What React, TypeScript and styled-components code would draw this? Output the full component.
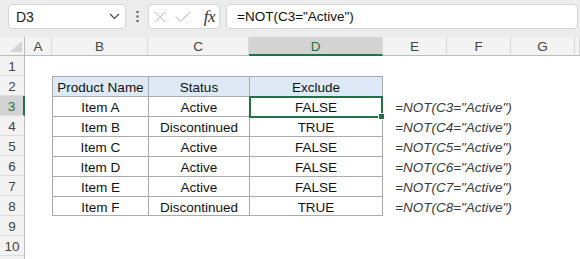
import React from "react";
import styled, { createGlobalStyle } from "styled-components";

const GREEN = "#217346";

const GlobalStyle = createGlobalStyle`
  html, body { margin: 0; padding: 0; background: #ffffff; overflow: hidden; }
  body { font-family: "Liberation Sans", Arial, sans-serif; }
`;

const Page = styled.div`
  width: 580px;
  height: 259px;
  overflow: hidden;
  display: flex;
  flex-direction: column;
  background: #ffffff;
`;

const Toolbar = styled.div`
  height: 37px;
  flex: none;
  background: #ececec;
  display: flex;
  align-items: flex-start;
  padding: 4px 2px 0 8px;
  box-sizing: border-box;
`;

const Box = styled.div<{ $w?: number }>`
  height: 25px;
  box-sizing: border-box;
  background: #ffffff;
  border: 1px solid #d6d6d6;
  border-radius: 4px;
  display: flex;
  align-items: center;
  ${(p) => (p.$w ? `width: ${p.$w}px; flex: none;` : "flex: 1;")}
`;

const NameBox = styled(Box)`
  justify-content: space-between;
  padding: 0 5px 0 7px;
  font-size: 14px;
  color: #222;
`;

const Dots = styled.div`
  width: 22px;
  height: 25px;
  flex: none;
  display: flex;
  align-items: center;
  justify-content: center;
`;

const FxBox = styled(Box)`
  padding: 0 4px 0 5px;
  gap: 8px;
`;

const FxText = styled.span`
  font-family: "Liberation Serif", "DejaVu Serif", serif;
  font-style: italic;
  font-size: 17px;
  color: #333;
  margin-left: 5px;
  letter-spacing: -0.5px;
`;

const FormulaBox = styled(Box)`
  margin-left: 6px;
  padding-left: 10px;
  font-size: 13.5px;
  color: #111;
`;

const Grid = styled.div`
  display: grid;
  grid-template-columns: 25px 27px 96px 101px 134px 64px 64px 64px 1fr;
  grid-template-rows: 19px repeat(11, 20px);
  font-size: 13.5px;
`;

const Corner = styled.div`
  background: #f3f3f3;
  border-right: 1px solid #bcbcbc;
  border-bottom: 1px solid #bcbcbc;
  box-sizing: border-box;
  display: flex;
  align-items: flex-end;
  justify-content: flex-end;
  padding: 0 2px 3px 0;
`;

const ColHeader = styled.div<{ $selected?: boolean }>`
  background: ${(p) => (p.$selected ? "#d3d3d3" : "#f3f3f3")};
  color: ${(p) => (p.$selected ? GREEN : "#444")};
  border-right: 1px solid #d9d9d9;
  border-bottom: ${(p) => (p.$selected ? `2px solid ${GREEN}` : "1px solid #bcbcbc")};
  box-sizing: border-box;
  display: flex;
  align-items: center;
  justify-content: center;
  font-size: 13.5px;
  padding-top: 1px;
`;

const RowHeader = styled.div<{ $selected?: boolean }>`
  background: ${(p) => (p.$selected ? "#d3d3d3" : "#f3f3f3")};
  color: ${(p) => (p.$selected ? GREEN : "#444")};
  border-right: ${(p) => (p.$selected ? `2px solid ${GREEN}` : "1px solid #bcbcbc")};
  border-bottom: 1px solid #dcdcdc;
  box-sizing: border-box;
  display: flex;
  align-items: center;
  justify-content: center;
  font-size: 13.5px;
  padding-top: 1px;
`;

const Cell = styled.div<{ $kind?: "blank" | "table" | "head" | "note"; $last?: boolean; $bottom?: boolean }>`
  box-sizing: border-box;
  position: relative;
  min-width: 0;
  display: flex;
  align-items: center;
  justify-content: ${(p) => (p.$kind === "note" ? "flex-start" : "center")};
  padding: 2px 0 0 ${(p) => (p.$kind === "note" ? "12px" : "0")};
  white-space: nowrap;
  overflow: visible;
  z-index: ${(p) => (p.$kind === "note" ? 1 : "auto")};
  color: ${(p) => (p.$kind === "note" ? "#3a3a3a" : "#111")};
  font-style: ${(p) => (p.$kind === "note" ? "italic" : "normal")};
  background: ${(p) =>
    p.$kind === "head" ? "#dde9f7" : p.$kind === "table" ? "#ffffff" : "transparent"};
  ${(p) =>
    p.$kind === "table" || p.$kind === "head"
      ? `border-top: 1px solid #ababab; border-left: 1px solid #ababab;`
      : ""}
  ${(p) => (p.$last ? "border-right: 1px solid #ababab;" : "")}
  ${(p) => (p.$bottom ? "border-bottom: 1px solid #ababab;" : "")}
`;

const Selection = styled.div`
  position: absolute;
  top: -1px;
  left: -1px;
  right: -1px;
  bottom: -2px;
  border: 2px solid ${GREEN};
  pointer-events: none;
  z-index: 3;
`;

const FillHandle = styled.div`
  position: absolute;
  right: -4px;
  bottom: -4px;
  width: 5px;
  height: 5px;
  background: ${GREEN};
  border: 1px solid #ffffff;
`;

const cols = ["A", "B", "C", "D", "E", "F", "G", ""];

const data: [string, string, string][] = [
  ["Item A", "Active", "FALSE"],
  ["Item B", "Discontinued", "TRUE"],
  ["Item C", "Active", "FALSE"],
  ["Item D", "Active", "FALSE"],
  ["Item E", "Active", "FALSE"],
  ["Item F", "Discontinued", "TRUE"],
];

function Chevron() {
  return (
    <svg width="11" height="7" viewBox="0 0 11 7">
      <path d="M1 1 L5.5 5.5 L10 1" fill="none" stroke="#444" strokeWidth="1.2" />
    </svg>
  );
}

function VDots() {
  return (
    <svg width="3" height="11" viewBox="0 0 3 11">
      <rect x="0.5" y="0" width="2" height="2" fill="#555" />
      <rect x="0.5" y="4.5" width="2" height="2" fill="#555" />
      <rect x="0.5" y="9" width="2" height="2" fill="#555" />
    </svg>
  );
}

function CrossIcon() {
  return (
    <svg width="14" height="12" viewBox="0 0 14 12">
      <path d="M1.5 0.5 L12.5 11.5 M12.5 0.5 L1.5 11.5" stroke="#b5b5b5" strokeWidth="1.1" fill="none" />
    </svg>
  );
}

function CheckIcon() {
  return (
    <svg width="18" height="12" viewBox="0 0 18 12">
      <path d="M1 5.5 L6 11 L17 0.5" stroke="#b5b5b5" strokeWidth="1.1" fill="none" />
    </svg>
  );
}

function SelectAllTriangle() {
  return (
    <svg width="12" height="11" viewBox="0 0 12 11">
      <path d="M12 0 L12 11 L0 11 Z" fill="#d4d4d4" />
    </svg>
  );
}

export default function App() {
  const rows: React.ReactNode[] = [];
  for (let r = 1; r <= 11; r++) {
    const rowCells: React.ReactNode[] = [];
    rowCells.push(
      <RowHeader key={`h${r}`} $selected={r === 3}>
        {r <= 10 ? r : ""}
      </RowHeader>
    );
    rowCells.push(<Cell key={`a${r}`} />);
    if (r === 2) {
      rowCells.push(<Cell key="b2" $kind="head">Product Name</Cell>);
      rowCells.push(<Cell key="c2" $kind="head">Status</Cell>);
      rowCells.push(<Cell key="d2" $kind="head" $last>Exclude</Cell>);
      rowCells.push(<Cell key="e2" />);
    } else if (r >= 3 && r <= 8) {
      const [name, status, ex] = data[r - 3];
      const bottom = r === 8;
      rowCells.push(<Cell key={`b${r}`} $kind="table" $bottom={bottom}>{name}</Cell>);
      rowCells.push(<Cell key={`c${r}`} $kind="table" $bottom={bottom}>{status}</Cell>);
      rowCells.push(
        <Cell key={`d${r}`} $kind="table" $last $bottom={bottom}>
          {ex}
          {r === 3 && (
            <Selection>
              <FillHandle />
            </Selection>
          )}
        </Cell>
      );
      rowCells.push(
        <Cell key={`e${r}`} $kind="note">
          {`=NOT(C${r}="Active")`}
        </Cell>
      );
    } else {
      rowCells.push(<Cell key={`b${r}`} />);
      rowCells.push(<Cell key={`c${r}`} />);
      rowCells.push(<Cell key={`d${r}`} />);
      rowCells.push(<Cell key={`e${r}`} />);
    }
    rowCells.push(<Cell key={`f${r}`} />);
    rowCells.push(<Cell key={`g${r}`} />);
    rowCells.push(<Cell key={`x${r}`} />);
    rows.push(<React.Fragment key={`r${r}`}>{rowCells}</React.Fragment>);
  }

  return (
    <Page>
      <GlobalStyle />
      <Toolbar>
        <NameBox $w={118}>
          <span>D3</span>
          <Chevron />
        </NameBox>
        <Dots>
          <VDots />
        </Dots>
        <FxBox $w={72}>
          <CrossIcon />
          <CheckIcon />
          <FxText>fx</FxText>
        </FxBox>
        <FormulaBox>=NOT(C3="Active")</FormulaBox>
      </Toolbar>
      <Grid>
        <Corner>
          <SelectAllTriangle />
        </Corner>
        {cols.map((c) => (
          <ColHeader key={c || "end"} $selected={c === "D"}>
            {c}
          </ColHeader>
        ))}
        {rows}
      </Grid>
    </Page>
  );
}
